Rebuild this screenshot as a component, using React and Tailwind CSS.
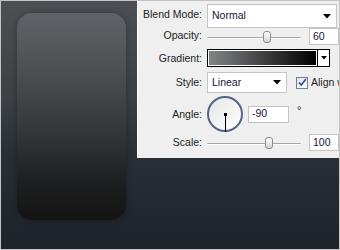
const font = { fontFamily: '"Liberation Sans", Arial, sans-serif' };

const Arrow = ({ small }) => (
  <svg width={small ? 6 : 8} height={small ? 4 : 5} viewBox={small ? '0 0 6 4' : '0 0 8 5'}>
    <path d={small ? 'M0 0h6L3 3.5z' : 'M0 0h8L4 4.5z'} fill="#000" />
  </svg>
);

const Slider = ({ pos }) => (
  <div className="relative ml-[4px] h-[14px] w-[98px]">
    <div className="absolute left-0 right-0 top-[7px] h-[2px] rounded-full border-t border-[#a6a6a6] bg-white" />
    <div
      className="absolute top-[1px] h-[12px] w-[8px] rounded-[3px] border border-[#8c8c8c] bg-gradient-to-b from-white to-[#d4d4d4]"
      style={{ left: pos }}
    />
  </div>
);

const Label = ({ children }) => (
  <div className="w-[65px] shrink-0 pr-[1px] text-right text-[10.5px] leading-none text-[#1c1c1c]">{children}</div>
);

export default function App() {
  return (
    <div
      className="relative h-[250px] w-[340px] overflow-hidden border border-[#c4c4c4] bg-[linear-gradient(to_bottom,#4c5054_0%,#3b4045_40%,#2a2f36_62%,#1e232a_100%)]"
      style={font}
    >
      {/* canvas shape */}
      <div className="ml-[16px] mt-[12px] h-[207px] w-[109px] rounded-[15px] bg-[linear-gradient(to_bottom,#5f6367_0%,#4b4e51_30%,#36393b_55%,#1f2021_80%,#141414_100%)] shadow-[0_0_6px_rgba(0,0,0,0.3)]" />

      {/* layer style panel */}
      <div className="absolute left-[136px] right-0 top-0 h-[157px] border-l border-white bg-[#efefef] pt-[3px]">
        {/* Blend Mode */}
        <div className="flex h-[24px] items-center">
          <Label>
            <span className="relative -top-[2px]">Blend Mode:</span>
          </Label>
          <div className="ml-[4px] flex h-[24px] w-[130px] shrink-0 items-center justify-between border border-[#c4c4c4] bg-white pl-[4px] pr-[5px]">
            <span className="text-[10.5px] text-[#14143a]">Normal</span>
            <Arrow />
          </div>
        </div>

        {/* Opacity */}
        <div className="flex h-[17px] items-center">
          <Label>
            <span className="relative -top-[1px]">Opacity:</span>
          </Label>
          <Slider pos={56} />
          <div className="ml-[8px] flex h-[17px] w-[30px] shrink-0 items-center border border-[#c4c4c4] bg-white pl-[3px] text-[10.5px] text-[#14143a]">
            60
          </div>
        </div>

        {/* Gradient */}
        <div className="mt-[4px] flex h-[18px] items-center">
          <Label>Gradient:</Label>
          <div className="ml-[4px] flex h-[18px] shrink-0 border border-black">
            <div className="h-full w-[109px] border border-white bg-[linear-gradient(to_right,#828486,#3a3a3b_55%,#000)]" />
            <div className="flex w-[12px] items-center justify-center border-l border-black bg-white">
              <Arrow small />
            </div>
          </div>
        </div>

        {/* Style */}
        <div className="mt-[5px] flex h-[21px] items-center">
          <Label>Style:</Label>
          <div className="ml-[4px] flex h-[21px] w-[80px] shrink-0 items-center justify-between border border-[#c4c4c4] bg-white pl-[4px] pr-[5px]">
            <span className="text-[10.5px] text-[#14143a]">Linear</span>
            <Arrow />
          </div>
          <div className="ml-[9px] flex h-[12px] w-[12px] shrink-0 items-center justify-center border border-[#6f7f96] bg-gradient-to-br from-[#dfe4ea] to-white">
            <svg width="9" height="9" viewBox="0 0 9 9">
              <path d="M1 4.5l2.2 2.5L8 1" fill="none" stroke="#2d4f9e" strokeWidth="1.6" />
            </svg>
          </div>
          <span className="ml-[3px] whitespace-nowrap text-[10.5px] text-[#1c1c1c]">Align with layer</span>
        </div>

        {/* Angle */}
        <div className="mt-[3px] flex h-[36px] items-center">
          <Label>Angle:</Label>
          <div className="relative ml-[4px] h-[36px] w-[36px] shrink-0 rounded-full border-2 border-[#56648a] bg-gradient-to-br from-[#e6e6e6] to-white">
            <div className="absolute left-[15px] top-[15px] h-[3px] w-[3px] bg-black" />
            <div className="absolute left-[16px] top-[16px] h-[18px] w-[1px] bg-black" />
          </div>
          <div className="ml-[5px] flex h-[17px] w-[41px] shrink-0 items-center border border-[#c4c4c4] bg-white pl-[3px] text-[10.5px] text-[#14143a]">
            -90
          </div>
          <span className="ml-[8px] self-start pt-[9px] text-[11px] leading-none text-[#1c1c1c]">°</span>
        </div>

        {/* Scale */}
        <div className="mt-[2px] flex h-[17px] items-center">
          <Label>Scale:</Label>
          <Slider pos={58} />
          <div className="ml-[8px] flex h-[17px] w-[30px] shrink-0 items-center border border-[#c4c4c4] bg-white pl-[3px] text-[10.5px] text-[#14143a]">
            100
          </div>
        </div>
      </div>
    </div>
  );
}
